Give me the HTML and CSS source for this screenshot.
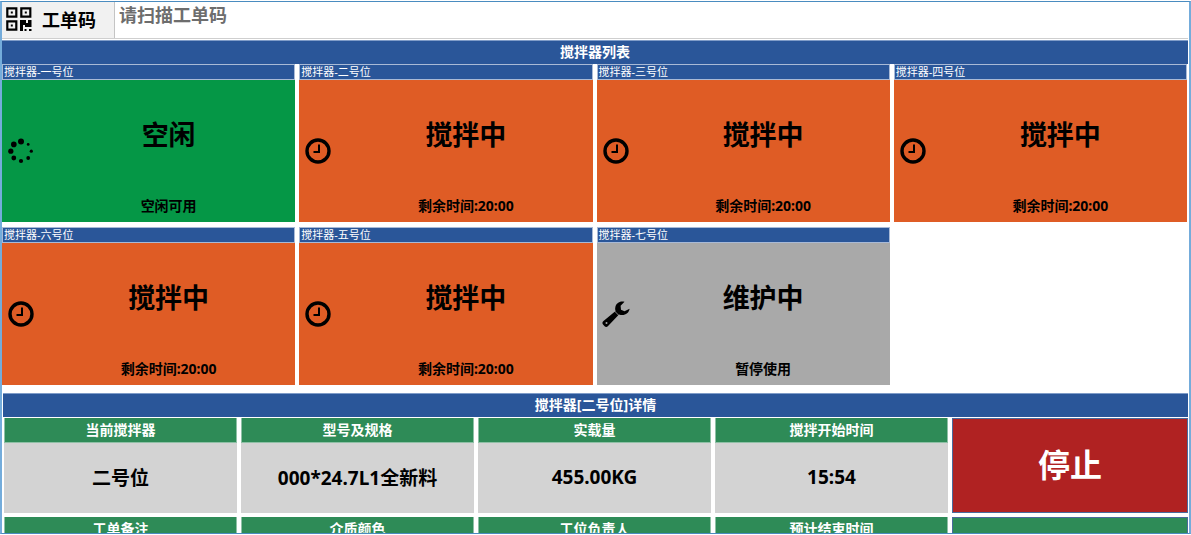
FILE: index.html
```html
<!DOCTYPE html>
<html lang="zh-CN">
<head>
    <meta charset="UTF-8">
    <meta name="viewport" content="width=device-width, initial-scale=1.0">
    <title>搅拌器列表</title>
    <link rel="stylesheet" href="styles.css">
</head>
<body>
    <svg class="sprite" aria-hidden="true">
        <symbol id="icon-clock" viewBox="0 0 26 26">
            <circle cx="13" cy="13" r="11" fill="none" stroke="#000" stroke-width="3.4"/>
            <path d="M14 6.5V14H8.5" fill="none" stroke="#000" stroke-width="2"/>
        </symbol>
        <symbol id="icon-idle" viewBox="0 0 26 26">
            <circle cx="13" cy="3.6" r="3"/>
            <circle cx="5.8" cy="6.4" r="2.8"/>
            <circle cx="2.8" cy="13.2" r="2.6"/>
            <circle cx="5.8" cy="20" r="2.4"/>
            <circle cx="13" cy="23" r="2.1"/>
            <circle cx="20.2" cy="20" r="1.9"/>
            <circle cx="23.3" cy="13.2" r="1.6"/>
            <circle cx="20.2" cy="6.4" r="1.4"/>
        </symbol>
        <symbol id="icon-wrench" viewBox="0 0 28 26">
            <path d="M22.5 .8C18-.4 13.800 2.200 13.300 6.500C13 8 13.200 9 13.600 10L1.200 20.200C.2 21.200.2 22.500 1 23.500L2.600 25.200C3.600 26.200 4.900 26.100 5.800 25.200L17 13.500C22 15.400 27 12.600 27.600 7.800L22.500 10.200L19 8.800L18.600 4.800Z"/>
            <path d="M12.500 10L17.400 15" stroke="#a9a9a9" stroke-width=".8"/>
            <circle cx="4.500" cy="21.900" r="1" fill="#a9a9a9"/>
        </symbol>
    </svg>

    <div class="container">
        <div class="scan">
            <label class="scan-label" for="work-order">
                <svg class="qr" viewBox="0 0 26 24" aria-hidden="true">
                    <path d="M1.300 1.300h9v8.400h-9zM15.300 1.300h9v8.400h-9zM1.300 14.300h9v8.400h-9z" fill="none" stroke="#000" stroke-width="2.200"/>
                    <path d="M4.800 4.500h2v2h-2zM18.800 4.500h2v2h-2zM4.800 17.500h2v2h-2z"/>
                    <path d="M14 13h6v3h2v-3h3.500v7H19v-2h-2v6h-3zM18.500 22h2v2h-2zM23 22h2.500v2H23z"/>
                </svg>
                工单码
            </label>
            <input class="scan-input" type="text" id="work-order" placeholder="请扫描工单码">
        </div>

        <h2 class="title">搅拌器列表</h2>
        <div class="mixers">
            <div class="mixer idle">
                <h3>搅拌器-一号位</h3>
                <div class="mixer-body">
                    <svg class="icon"><use href="#icon-idle"/></svg>
                    <div class="state">空闲</div>
                    <div class="note">空闲可用</div>
                </div>
            </div>
            <div class="mixer busy">
                <h3>搅拌器-二号位</h3>
                <div class="mixer-body">
                    <svg class="icon"><use href="#icon-clock"/></svg>
                    <div class="state">搅拌中</div>
                    <div class="note">剩余时间:20:00</div>
                </div>
            </div>
            <div class="mixer busy">
                <h3>搅拌器-三号位</h3>
                <div class="mixer-body">
                    <svg class="icon"><use href="#icon-clock"/></svg>
                    <div class="state">搅拌中</div>
                    <div class="note">剩余时间:20:00</div>
                </div>
            </div>
            <div class="mixer busy">
                <h3>搅拌器-四号位</h3>
                <div class="mixer-body">
                    <svg class="icon"><use href="#icon-clock"/></svg>
                    <div class="state">搅拌中</div>
                    <div class="note">剩余时间:20:00</div>
                </div>
            </div>
            <div class="mixer busy">
                <h3>搅拌器-六号位</h3>
                <div class="mixer-body">
                    <svg class="icon"><use href="#icon-clock"/></svg>
                    <div class="state">搅拌中</div>
                    <div class="note">剩余时间:20:00</div>
                </div>
            </div>
            <div class="mixer busy">
                <h3>搅拌器-五号位</h3>
                <div class="mixer-body">
                    <svg class="icon"><use href="#icon-clock"/></svg>
                    <div class="state">搅拌中</div>
                    <div class="note">剩余时间:20:00</div>
                </div>
            </div>
            <div class="mixer repair">
                <h3>搅拌器-七号位</h3>
                <div class="mixer-body">
                    <svg class="icon"><use href="#icon-wrench"/></svg>
                    <div class="state">维护中</div>
                    <div class="note">暂停使用</div>
                </div>
            </div>
        </div>

        <div class="detail">
            <h2 class="title">搅拌器[二号位]详情</h2>
            <div class="fields">
                <div class="field">
                    <h4>当前搅拌器</h4>
                    <div class="value">二号位</div>
                </div>
                <div class="field">
                    <h4>型号及规格</h4>
                    <div class="value">000*24.7L1全新料</div>
                </div>
                <div class="field">
                    <h4>实载量</h4>
                    <div class="value">455.00KG</div>
                </div>
                <div class="field">
                    <h4>搅拌开始时间</h4>
                    <div class="value">15:54</div>
                </div>
                <button class="stop" type="button">停止</button>
                <div class="field">
                    <h4>工单备注</h4>
                    <div class="value"></div>
                </div>
                <div class="field">
                    <h4>介质颜色</h4>
                    <div class="value"></div>
                </div>
                <div class="field">
                    <h4>工位负责人</h4>
                    <div class="value"></div>
                </div>
                <div class="field">
                    <h4>预计结束时间</h4>
                    <div class="value"></div>
                </div>
                <button class="start" type="button" aria-label="开始"></button>
            </div>
        </div>
    </div>
</body>
</html>
```
FILE: styles.css
```css
* {
    box-sizing: border-box;
}

body {
    margin: 0;
    padding: 1px 0;
    height: 100vh;
    overflow: hidden;
    background: white;
    color: black;
    font-family: "Noto Sans", "Noto Sans CJK SC", sans-serif;
    font-weight: bold;
}

h2, h3, h4 {
    margin: 0;
}

.sprite {
    display: none;
}

.container {
    height: 100%;
    overflow: hidden;
    padding-right: 1px;
    border: 2px solid #74acdb;
    border-top: 1px solid #4a8cc0;
    border-bottom: 1px solid #4a8cc0;
}

/* scan bar */
.scan {
    display: flex;
    height: 37px;
    margin-bottom: 1px;
    border-bottom: 1px solid #cfcfcf;
}

.scan-label {
    display: flex;
    align-items: center;
    gap: 10px;
    width: 113px;
    padding: 0 0 2px 4px;
    background: #f1f1f1;
    border-right: 1px solid #c4c4c4;
    font-size: 18px;
}

.qr {
    width: 26px;
    height: 24px;
}

.scan-input {
    flex: 1;
    min-width: 0;
    padding: 0 4px 10px;
    border: none;
    outline: none;
    font: inherit;
    font-size: 18px;
}

.scan-input::placeholder {
    color: #6d6d6d;
}

.title {
    height: 24px;
    background: #2a5699;
    border-top: 1px solid #7f9cc8;
    color: white;
    font-size: 14px;
    line-height: 21px;
    text-align: center;
}

/* mixer cards */
.mixers {
    display: grid;
    grid-template-columns: repeat(4, 1fr);
    gap: 5px 4px;
    margin-right: 1px;
}

.mixer h3 {
    height: 16px;
    padding: 0 1px;
    background: #2a5699;
    border: 1px solid #a9bad6;
    color: white;
    font-size: 11px;
    font-weight: normal;
    line-height: 13px;
}

.mixer-body {
    display: grid;
    grid-template-columns: 40px 1fr;
    grid-template-rows: 107px 35px;
    align-items: center;
    text-align: center;
}

.icon {
    grid-row: span 2;
    width: 28px;
    height: 26px;
    margin-left: 5px;
}

.state {
    font-size: 27px;
}

.note {
    font-size: 14px;
}

.idle {
    background: #059746;
}

.busy {
    background: #df5c25;
}

.repair {
    background: #a9a9a9;
}

/* detail of the selected mixer */
.detail {
    margin: 8px 0 0 1px;
}

.fields {
    display: grid;
    grid-template-columns: repeat(4, 1fr) 236px;
    grid-auto-rows: 95px;
    gap: 4px;
    margin: 1px 0 0 1px;
}

.field {
    background: #d3d3d3;
}

.field h4 {
    height: 25px;
    background: #2e8b57;
    border: 1px solid #8fc0a6;
    border-top: none;
    color: white;
    font-size: 14px;
    line-height: 24px;
    text-align: center;
}

.value {
    display: flex;
    justify-content: center;
    align-items: center;
    height: 70px;
    padding-bottom: 2px;
    font-size: 19px;
}

.stop, .start {
    padding: 0 0 6px;
    border: 1px solid #4a6a9c;
    background: #b02222;
    color: white;
    font: inherit;
    font-size: 32px;
}

.start {
    background: #2e8b57;
}
```
